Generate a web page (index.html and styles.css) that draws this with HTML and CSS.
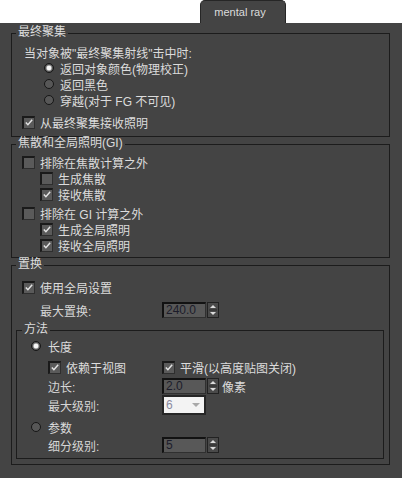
FILE: index.html
```html
<!DOCTYPE html>
<html>
<head>
<meta charset="utf-8">
<link rel="stylesheet" href="styles.css">
</head>
<body>
<div class="tabbar"><div class="tab">mental ray</div></div>
<div class="panel">
  <fieldset class="group g1">
    <legend>最终聚集</legend>
    <div class="row text-ind">当对象被"最终聚集射线"击中时:</div>
    <div class="row radio-row"><span class="radio on"></span><span>返回对象颜色(物理校正)</span></div>
    <div class="row radio-row"><span class="radio"></span><span>返回黑色</span></div>
    <div class="row radio-row"><span class="radio"></span><span>穿越(对于 FG 不可见)</span></div>
    <div class="row chk-row gap6"><span class="chk on"><svg width="11" height="11" viewBox="0 0 11 11"><path d="M2 5.5 L4.3 8 L9 2.5" fill="none" stroke="#e4e4e4" stroke-width="1.6"/></svg></span><span>从最终聚集接收照明</span></div>
  </fieldset>

  <fieldset class="group g2">
    <legend>焦散和全局照明(GI)</legend>
    <div class="row chk-row"><span class="chk"></span><span>排除在焦散计算之外</span></div>
    <div class="row chk-row sub"><span class="chk"></span><span>生成焦散</span></div>
    <div class="row chk-row sub"><span class="chk on"><svg width="11" height="11" viewBox="0 0 11 11"><path d="M2 5.5 L4.3 8 L9 2.5" fill="none" stroke="#e4e4e4" stroke-width="1.6"/></svg></span><span>接收焦散</span></div>
    <div class="row chk-row gap3"><span class="chk"></span><span>排除在 GI 计算之外</span></div>
    <div class="row chk-row sub"><span class="chk on"><svg width="11" height="11" viewBox="0 0 11 11"><path d="M2 5.5 L4.3 8 L9 2.5" fill="none" stroke="#e4e4e4" stroke-width="1.6"/></svg></span><span>生成全局照明</span></div>
    <div class="row chk-row sub"><span class="chk on"><svg width="11" height="11" viewBox="0 0 11 11"><path d="M2 5.5 L4.3 8 L9 2.5" fill="none" stroke="#e4e4e4" stroke-width="1.6"/></svg></span><span>接收全局照明</span></div>
  </fieldset>

  <fieldset class="group g3">
    <legend>置换</legend>
    <div class="row chk-row"><span class="chk on"><svg width="11" height="11" viewBox="0 0 11 11"><path d="M2 5.5 L4.3 8 L9 2.5" fill="none" stroke="#e4e4e4" stroke-width="1.6"/></svg></span><span>使用全局设置</span></div>
    <div class="row field-row outer">
      <span class="lbl">最大置换:</span>
      <span class="num">240.0</span>
      <span class="spin"><svg width="10" height="14" viewBox="0 0 10 14"><path d="M2 5 L5 2 L8 5 Z" fill="#dcdcdc"/><path d="M1 7 H9" stroke="#2a2a2a" stroke-width="1"/><path d="M2 9 L5 12 L8 9 Z" fill="#dcdcdc"/></svg></span>
    </div>

    <fieldset class="subgroup">
      <legend>方法</legend>
      <div class="row sub-radio"><span class="radio on"></span><span>长度</span></div>
      <div class="row sub-chks">
        <span class="cell"><span class="chk on"><svg width="11" height="11" viewBox="0 0 11 11"><path d="M2 5.5 L4.3 8 L9 2.5" fill="none" stroke="#e4e4e4" stroke-width="1.6"/></svg></span><span>依赖于视图</span></span>
        <span class="cell2"><span class="chk on"><svg width="11" height="11" viewBox="0 0 11 11"><path d="M2 5.5 L4.3 8 L9 2.5" fill="none" stroke="#e4e4e4" stroke-width="1.6"/></svg></span><span>平滑(以高度贴图关闭)</span></span>
      </div>
      <div class="row field-row inner edge">
        <span class="lbl">边长:</span>
        <span class="num">2.0</span>
        <span class="spin"><svg width="10" height="14" viewBox="0 0 10 14"><path d="M2 5 L5 2 L8 5 Z" fill="#dcdcdc"/><path d="M1 7 H9" stroke="#2a2a2a" stroke-width="1"/><path d="M2 9 L5 12 L8 9 Z" fill="#dcdcdc"/></svg></span>
        <span class="unit">像素</span>
      </div>
      <div class="row field-row inner tall">
        <span class="lbl">最大级别:</span>
        <span class="drop"><span>6</span><svg width="8" height="4" viewBox="0 0 8 4"><path d="M0 0 H8 L4 4 Z" fill="#a8a8a8"/></svg></span>
      </div>
      <div class="row sub-radio gap4"><span class="radio"></span><span>参数</span></div>
      <div class="row field-row inner sub-level">
        <span class="lbl">细分级别:</span>
        <span class="num">5</span>
        <span class="spin"><svg width="10" height="14" viewBox="0 0 10 14"><path d="M2 5 L5 2 L8 5 Z" fill="#dcdcdc"/><path d="M1 7 H9" stroke="#2a2a2a" stroke-width="1"/><path d="M2 9 L5 12 L8 9 Z" fill="#dcdcdc"/></svg></span>
      </div>
    </fieldset>
  </fieldset>
</div>
</body>
</html>
```

FILE: styles.css
```css
* { box-sizing: border-box; }

html, body {
  margin: 0;
  background: #444444;
}

body {
  font-family: "Liberation Sans", "Noto Sans CJK SC", sans-serif;
  font-size: 12px;
  color: #dcdcdc;
}

.tabbar {
  height: 23px;
  background: #ffffff;
  display: flex;
  padding-left: 200px;
}

.tab {
  width: 86px;
  height: 23px;
  background: #444444;
  border: 1px solid #262626;
  border-bottom: 0;
  border-radius: 5px 5px 0 0;
  font-size: 11px;
  line-height: 22px;
  text-align: center;
  padding-right: 6px;
  color: #dcdcdc;
}

.panel {
  padding: 3px 12px 0 11px;
}

fieldset {
  margin: 0;
  min-width: 0;
  border: 1px solid #1c1c1c;
}

legend {
  font-size: 12px;
  line-height: 12px;
  padding: 0 2px 3px;
  margin-left: 4px;
  color: #dcdcdc;
}

.g1 { padding: 3px 0 6px; }
.g2 { padding: 2px 0 4px; }
.g3 { padding: 6px 0 5px; }

.row {
  height: 16px;
  display: flex;
  align-items: center;
  white-space: nowrap;
}

.text-ind { padding-left: 12px; }

.radio-row { padding-left: 32px; gap: 6px; }

.chk-row { padding-left: 10px; gap: 5px; }
.chk-row.sub { padding-left: 28px; }

.gap6 { margin-top: 6px; }
.gap3 { margin-top: 3px; }
.gap4 { margin-top: 4px; }

.radio {
  width: 10px;
  height: 10px;
  flex: none;
  border-radius: 50%;
  border: 1px solid #161616;
  background: #575757;
}

.radio.on {
  background: radial-gradient(circle, #f6f6f6 0 2px, #a0a0a0 2.6px, #5a5a5a 3.4px);
}

.chk {
  width: 13px;
  height: 13px;
  flex: none;
  display: flex;
  align-items: center;
  justify-content: center;
  border-style: solid;
  border-width: 2px 1px 1px 2px;
  border-color: #1a1a1a #2e2e2e #2e2e2e #1a1a1a;
  background: #5a5a5a;
}

.chk svg { display: block; }

.field-row { margin-top: 7px; }
.field-row.outer { padding-left: 28px; }
.field-row.outer .lbl { width: 122px; }

.field-row.inner { padding-left: 31px; }
.field-row.inner .lbl { width: 114px; }

.lbl { flex: none; color: #d6d6d6; }

.num {
  width: 44px;
  height: 16px;
  flex: none;
  border-style: solid;
  border-width: 2px 1px 1px 2px;
  border-color: #121212 #303030 #303030 #121212;
  background: #585858;
  color: #1c1c2a;
  padding-left: 2px;
  font-size: 12px;
  line-height: 13px;
}

.spin {
  width: 12px;
  height: 16px;
  flex: none;
  margin-left: 1px;
  border: 1px solid #222222;
  background: #4a4a4a;
  display: flex;
}

.spin svg { display: block; }

.unit { margin-left: 3px; }

.drop {
  width: 44px;
  height: 20px;
  flex: none;
  border: 2px solid #262626;
  background: #f3f3f3;
  color: #8a8aa0;
  padding: 0 4px 0 2px;
  display: flex;
  align-items: center;
  justify-content: space-between;
}

.drop svg { display: block; }

.subgroup {
  margin: 5px 5px 0 4px;
  padding: 0 0 5px;
}

.subgroup legend { margin-left: 5px; }

.sub-radio { padding-left: 14px; gap: 7px; }

.sub-chks { padding-left: 31px; margin-top: 5px; }
.sub-chks .cell {
  width: 114px;
  display: flex;
  align-items: center;
  gap: 5px;
}
.sub-chks .cell2 {
  display: flex;
  align-items: center;
  gap: 5px;
}

.field-row.edge { margin-top: 3px; }
.field-row.tall { height: 20px; margin-top: 1px; }
.field-row.sub-level { margin-top: 2px; }
```
